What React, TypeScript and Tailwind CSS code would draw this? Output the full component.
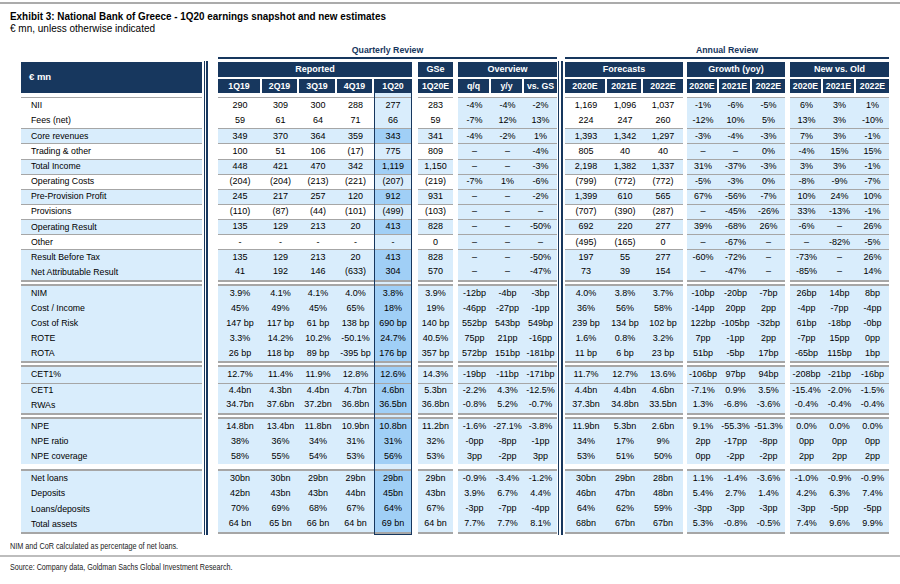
type Kind = 'q' | 'hl' | 'pct'
type Col = { h: string; w: string; i: number; k: Kind }
type Group = { title: string; ml: string; cols: Col[] }
type Row = { l: string; v: string[]; b: boolean; s: boolean }

const r = (l: string, v: string, b = true, s = false): Row => ({ l, v: v.split('|'), b, s })

const SECTIONS: Row[][] = [
  [
    r('NII', '290|309|300|288|277|283|-4%|-4%|-2%|1,169|1,096|1,037|-1%|-6%|-5%|6%|3%|1%', false),
    r('Fees (net)', '59|61|64|71|66|59|-7%|12%|13%|224|247|260|-12%|10%|5%|13%|3%|-10%', false),
    r('Core revenues', '349|370|364|359|343|341|-4%|-2%|1%|1,393|1,342|1,297|-3%|-4%|-3%|7%|3%|-1%', true, true),
    r('Trading & other', '100|51|106|(17)|775|809|–|–|-4%|805|40|40|–|–|0%|-4%|15%|15%', false, true),
    r('Total Income', '448|421|470|342|1,119|1,150|–|–|-3%|2,198|1,382|1,337|31%|-37%|-3%|3%|3%|-1%', true, true),
    r('Operating Costs', '(204)|(204)|(213)|(221)|(207)|(219)|-7%|1%|-6%|(799)|(772)|(772)|-5%|-3%|0%|-8%|-9%|-7%', false, true),
    r('Pre-Provision Profit', '245|217|257|120|912|931|–|–|-2%|1,399|610|565|67%|-56%|-7%|10%|24%|10%', true, true),
    r('Provisions', '(110)|(87)|(44)|(101)|(499)|(103)|–|–|–|(707)|(390)|(287)|–|-45%|-26%|33%|-13%|-1%', false, true),
    r('Operating Result', '135|129|213|20|413|828|–|–|-50%|692|220|277|39%|-68%|26%|-6%|–|26%', true, true),
    r('Other', '-|-|-|-|-|0|–|–|–|(495)|(165)|0|–|-67%|–|–|-82%|-5%', false, true),
    r('Result Before Tax', '135|129|213|20|413|828|–|–|-50%|197|55|277|-60%|-72%|–|-73%|–|26%', true, true),
    r('Net Attributable Result', '41|192|146|(633)|304|570|–|–|-47%|73|39|154|–|-47%|–|-85%|–|14%', true),
  ],
  [
    r('NIM', '3.9%|4.1%|4.1%|4.0%|3.8%|3.9%|-12bp|-4bp|-3bp|4.0%|3.8%|3.7%|-10bp|-20bp|-7bp|26bp|14bp|8bp'),
    r('Cost / Income', '45%|49%|45%|65%|18%|19%|-46pp|-27pp|-1pp|36%|56%|58%|-14pp|20pp|2pp|-4pp|-7pp|-4pp'),
    r('Cost of Risk', '147 bp|117 bp|61 bp|138 bp|690 bp|140 bp|552bp|543bp|549bp|239 bp|134 bp|102 bp|122bp|-105bp|-32bp|61bp|-18bp|-0bp'),
    r('ROTE', '3.3%|14.2%|10.2%|-50.1%|24.7%|40.5%|75pp|21pp|-16pp|1.6%|0.8%|3.2%|7pp|-1pp|2pp|-7pp|15pp|0pp'),
    r('ROTA', '26 bp|118 bp|89 bp|-395 bp|176 bp|357 bp|572bp|151bp|-181bp|11 bp|6 bp|23 bp|51bp|-5bp|17bp|-65bp|115bp|1bp'),
  ],
  [
    r('CET1%', '12.7%|11.4%|11.9%|12.8%|12.6%|14.3%|-19bp|-11bp|-171bp|11.7%|12.7%|13.6%|-106bp|97bp|94bp|-208bp|-21bp|-16bp'),
    r('CET1', '4.4bn|4.3bn|4.4bn|4.7bn|4.6bn|5.3bn|-2.2%|4.3%|-12.5%|4.4bn|4.4bn|4.6bn|-7.1%|0.9%|3.5%|-15.4%|-2.0%|-1.5%', true, true),
    r('RWAs', '34.7bn|37.6bn|37.2bn|36.8bn|36.5bn|36.8bn|-0.8%|5.2%|-0.7%|37.3bn|34.8bn|33.5bn|1.3%|-6.8%|-3.6%|-0.4%|-0.4%|-0.4%'),
  ],
  [
    r('NPE', '14.8bn|13.4bn|11.8bn|10.9bn|10.8bn|11.2bn|-1.6%|-27.1%|-3.8%|11.9bn|5.3bn|2.6bn|9.1%|-55.3%|-51.3%|0.0%|0.0%|0.0%'),
    r('NPE ratio', '38%|36%|34%|31%|31%|32%|-0pp|-8pp|-1pp|34%|17%|9%|2pp|-17pp|-8pp|0pp|0pp|0pp'),
    r('NPE coverage', '58%|55%|54%|53%|56%|53%|3pp|-2pp|3pp|53%|51%|50%|0pp|-2pp|-2pp|2pp|2pp|2pp'),
  ],
  [
    r('Net loans', '30bn|30bn|29bn|29bn|29bn|29bn|-0.9%|-3.4%|-1.2%|30bn|29bn|28bn|1.1%|-1.4%|-3.6%|-1.0%|-0.9%|-0.9%'),
    r('Deposits', '42bn|43bn|43bn|44bn|45bn|43bn|3.9%|6.7%|4.4%|46bn|47bn|48bn|5.4%|2.7%|1.4%|4.2%|6.3%|7.4%'),
    r('Loans/deposits', '70%|69%|68%|67%|64%|67%|-3pp|-7pp|-4pp|64%|62%|59%|-3pp|-3pp|-3pp|-3pp|-5pp|-5pp'),
    r('Total assets', '64 bn|65 bn|66 bn|64 bn|69 bn|64 bn|7.7%|7.7%|8.1%|68bn|67bn|67bn|5.3%|-0.8%|-0.5%|7.4%|9.6%|9.9%'),
  ],
]

// section borders: gray rules, white gaps between blocks
const SEC = [
  'border-t-[1.5px] border-b-[2px] border-[#a6a6a6]',
  'mt-[2px] border-y-[2px] border-[#a6a6a6]',
  'mt-[2px] border-y-[2px] border-[#a6a6a6]',
  'mt-[2px] border-t-[2px] border-[#a6a6a6]',
  'mt-[5px] border-y-[2px] border-[#a6a6a6]',
]

const QUARTERLY: Group[] = [
  {
    title: 'Reported',
    ml: '',
    cols: [
      { h: '1Q19', w: 'w-[44px]', i: 0, k: 'q' },
      { h: '2Q19', w: 'w-[37px]', i: 1, k: 'q' },
      { h: '3Q19', w: 'w-[38px]', i: 2, k: 'q' },
      { h: '4Q19', w: 'w-[37px]', i: 3, k: 'q' },
      { h: '1Q20', w: 'w-[38px]', i: 4, k: 'hl' },
    ],
  },
  { title: 'GSe', ml: 'ml-[6px]', cols: [{ h: '1Q20E', w: 'w-[35px]', i: 5, k: 'q' }] },
  {
    title: 'Overview',
    ml: 'ml-[5px]',
    cols: [
      { h: 'q/q', w: 'w-[33px]', i: 6, k: 'pct' },
      { h: 'y/y', w: 'w-[33px]', i: 7, k: 'pct' },
      { h: 'vs. GS', w: 'w-[33px]', i: 8, k: 'pct' },
    ],
  },
]

const ANNUAL: Group[] = [
  {
    title: 'Forecasts',
    ml: '',
    cols: [
      { h: '2020E', w: 'w-[42px]', i: 9, k: 'q' },
      { h: '2021E', w: 'w-[36px]', i: 10, k: 'q' },
      { h: '2022E', w: 'w-[40px]', i: 11, k: 'q' },
    ],
  },
  {
    title: 'Growth (yoy)',
    ml: 'ml-[4px]',
    cols: [
      { h: '2020E', w: 'w-[32px]', i: 12, k: 'pct' },
      { h: '2021E', w: 'w-[33px]', i: 13, k: 'pct' },
      { h: '2022E', w: 'w-[33px]', i: 14, k: 'pct' },
    ],
  },
  {
    title: 'New vs. Old',
    ml: 'ml-[5px]',
    cols: [
      { h: '2020E', w: 'w-[33px]', i: 15, k: 'pct' },
      { h: '2021E', w: 'w-[33px]', i: 16, k: 'pct' },
      { h: '2022E', w: 'w-[33px]', i: 17, k: 'pct' },
    ],
  },
]

function bg(k: Kind, blue: boolean) {
  if (k === 'hl') return blue ? 'bg-[#a0cff6]' : ''
  if (k === 'pct') return 'bg-[#d9edfc]'
  return blue ? 'bg-[#d9edfc]' : 'bg-white'
}

function LabelColumn() {
  return (
    <div className="flex w-[181px] flex-col">
      <div className="h-[18px]" />
      <div className="flex h-[31px] items-center bg-[#17375e] pl-[8px] text-[9.5px] font-bold text-white">€ mn</div>
      <div className="h-[4px]" />
      {SECTIONS.map((rows, si) => (
        <div key={si} className={SEC[si]}>
          {rows.map((row) => (
            <div
              key={row.l}
              className={`flex h-[15.15px] items-center pl-[10px] text-[8.75px] ${row.s ? 'border-t border-[#a6a6a6]' : ''} ${row.b ? 'bg-[#d9edfc]' : 'bg-white'}`}
            >
              {row.l}
            </div>
          ))}
        </div>
      ))}
    </div>
  )
}

function DataColumn({ c, last }: { c: Col; last: boolean }) {
  const hl = c.k === 'hl'
  return (
    <div className={`${c.w} flex flex-col ${hl ? 'border-x-[1.5px] border-b-[1.5px] border-[#17375e] bg-[#d9edfc]' : ''}`}>
      <div
        className={`h-[14.5px] bg-[#17375e] text-center text-[8.75px] font-bold leading-[14.5px] text-white ${last ? '' : 'border-r-2 border-white'}`}
      >
        {c.h}
      </div>
      <div className="h-[4px]" />
      {SECTIONS.map((rows, si) => (
        <div key={si} className={SEC[si]}>
          {rows.map((row) => (
            <div
              key={row.l}
              className={`flex h-[15.15px] items-center justify-center whitespace-nowrap text-[9px] ${row.s ? 'border-t border-[#a6a6a6]' : ''} ${bg(c.k, row.b)}`}
            >
              {row.v[c.i]}
            </div>
          ))}
        </div>
      ))}
    </div>
  )
}

function GroupView({ g }: { g: Group }) {
  return (
    <div className={`flex flex-col ${g.ml}`}>
      <div className="mb-[1.5px] h-[15px] bg-[#17375e] text-center text-[9px] font-bold leading-[15px] text-white">
        {g.title}
      </div>
      <div className="flex">
        {g.cols.map((c, i) => (
          <DataColumn key={c.i} c={c} last={i === g.cols.length - 1} />
        ))}
      </div>
    </div>
  )
}

function Block({ title, groups }: { title: string; groups: Group[] }) {
  return (
    <div className="flex flex-col">
      <div className="h-[12.5px] text-center text-[8.75px] font-bold leading-[12.5px] text-[#17375e]">{title}</div>
      <div className="h-[2px] bg-[#17375e]" />
      <div className="h-[3.5px]" />
      <div className="flex">
        {groups.map((g) => (
          <GroupView key={g.title} g={g} />
        ))}
      </div>
    </div>
  )
}

export default function App() {
  return (
    <div className="h-[584px] w-[900px] overflow-hidden bg-white font-['Liberation_Sans',Arial,sans-serif] text-black">
      <div className="mt-[2px] h-[1.5px] bg-[#ababab]" />
      <div className="mt-[5.5px] h-[14px] px-[10px]">
        <div className="origin-left scale-x-[0.853] whitespace-nowrap text-[11.6px] font-bold leading-[14px]">
          Exhibit 3: National Bank of Greece - 1Q20 earnings snapshot and new estimates
        </div>
      </div>
      <div className="h-[12px] px-[10px] text-[10px] leading-[12px]">€ mn, unless otherwise indicated</div>

      <div className="mt-[9px] flex pl-[21px]">
        <LabelColumn />
        <div className="mt-[17px] mr-[10px] ml-[1.5px] w-[4.5px] border-r-2 border-l border-[#17375e]" />
        <Block title="Quarterly Review" groups={QUARTERLY} />
        <div className="mt-[17px] mr-[2.5px] ml-[1px] w-[4.5px] border-r-2 border-l border-[#17375e]" />
        <Block title="Annual Review" groups={ANNUAL} />
      </div>

      <div className="mt-[5.5px] h-[12px] px-[10px]">
        <div className="origin-left scale-x-[0.78] whitespace-nowrap text-[9.3px] leading-[12px] text-[#1a1a1a]">
          NIM and CoR calculated as percentage of net loans.
        </div>
      </div>
      <div className="mt-[3px] h-[2px] bg-[#bdbdbd]" />
      <div className="mt-[4px] h-[12px] px-[10px]">
        <div className="origin-left scale-x-[0.77] whitespace-nowrap text-[9.3px] leading-[12px] text-[#1a1a1a]">
          Source: Company data, Goldman Sachs Global Investment Research.
        </div>
      </div>
    </div>
  )
}
